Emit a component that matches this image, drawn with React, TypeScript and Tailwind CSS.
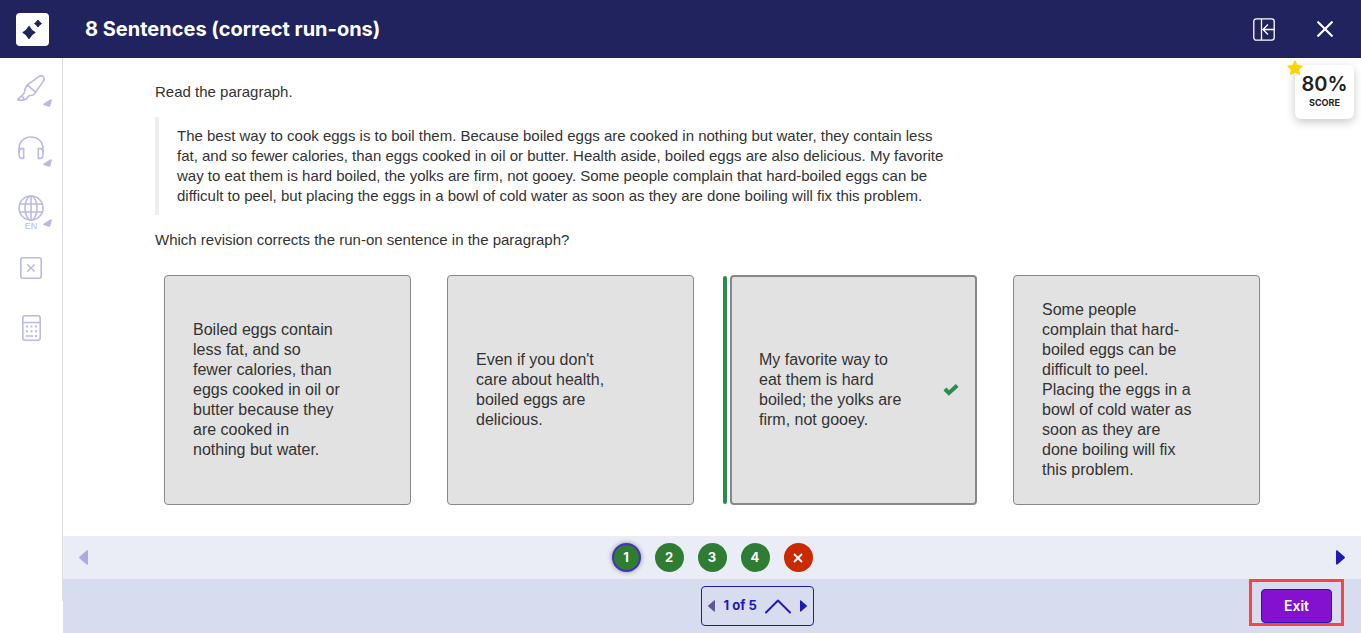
import type { ReactNode } from "react";

const answers = [
  { text: "Boiled eggs contain less fat, and so fewer calories, than eggs cooked in oil or butter because they are cooked in nothing but water.", correct: false },
  { text: "Even if you don't care about health, boiled eggs are delicious.", correct: false },
  { text: "My favorite way to eat them is hard boiled; the yolks are firm, not gooey.", correct: true },
  { text: "Some people complain that hard-boiled eggs can be difficult to peel. Placing the eggs in a bowl of cold water as soon as they are done boiling will fix this problem.", correct: false },
];

const questions = [
  { id: 1, correct: true },
  { id: 2, correct: true },
  { id: 3, correct: true },
  { id: 4, correct: true },
  { id: 5, correct: false },
];

function SparkleLogo() {
  return (
    <svg width="33" height="33" viewBox="0 0 33 33" aria-hidden="true">
      <rect width="33" height="33" rx="4" fill="#fff" />
      <path d="M13 13.6 Q15 17.5 18.9 19.5 Q15 21.5 13 25.4 Q11 21.5 7.1 19.5 Q11 17.5 13 13.6Z" fill="#21235e" stroke="#21235e" strokeWidth="1.2" strokeLinejoin="round" />
      <path d="M22 7 Q23.2 9.3 25.5 10.5 Q23.2 11.7 22 14 Q20.8 11.7 18.5 10.5 Q20.8 9.3 22 7Z" fill="#21235e" stroke="#21235e" strokeLinejoin="round" />
    </svg>
  );
}

function PanelIcon() {
  return (
    <svg width="22" height="23" viewBox="0 0 22 23" fill="none" stroke="#fff" strokeWidth="1.3" aria-hidden="true">
      <rect x="0.8" y="0.8" width="20.4" height="21.4" rx="2.6" />
      <path d="M8.5 1v21M21 11.5H10.5M15 6.5l-5 5 5 5" />
    </svg>
  );
}

function HighlighterIcon() {
  return (
    <svg width="28" height="28" viewBox="0 0 28 28" fill="none" stroke="currentColor" strokeWidth="1.6" strokeLinejoin="round" aria-hidden="true">
      <path d="M10.3 10.8 L22.5 2.2 Q24.6 0.9 26.3 2.7 Q27.8 4.4 26.7 6.6 L18.6 18.2" />
      <path d="M10.3 10.8 L18.6 18.2 L16.4 21 L12 21.8 L9.3 25 L7.4 25.6 L4.8 21.7 L7.4 18.8 L8 15z" />
      <path d="M4.8 21.7 L1 25.2 Q0.5 26 1.7 26.1 L6.4 26.1 L7.4 25.6" />
    </svg>
  );
}

function HeadphonesIcon() {
  return (
    <svg width="26" height="24" viewBox="0 0 26 24" fill="none" stroke="currentColor" strokeWidth="1.6" aria-hidden="true">
      <path d="M1 17V12.5C1 5.8 6 1 13 1s12 4.8 12 11.5V17" />
      <path d="M5.7 12.6v9.8H3.5C1.8 22.4 1 20.5 1 17.5s.8-4.9 2.5-4.9zM20.3 12.6v9.8h2.2c1.7 0 2.5-1.9 2.5-4.9s-.8-4.9-2.5-4.9z" strokeLinejoin="round" />
    </svg>
  );
}

function GlobeIcon() {
  return (
    <svg width="26" height="26" viewBox="0 0 26 26" fill="none" stroke="currentColor" strokeWidth="1.6" aria-hidden="true">
      <circle cx="13" cy="13" r="12" />
      <ellipse cx="13" cy="13" rx="6" ry="12" />
      <path d="M13 1v24M2 9h22M2 17h22" />
    </svg>
  );
}

function BoxedXIcon() {
  return (
    <svg width="22" height="22" viewBox="0 0 22 22" fill="none" stroke="currentColor" strokeWidth="1.6" aria-hidden="true">
      <rect x="0.8" y="0.8" width="20.4" height="20.4" rx="2.2" />
      <path d="M7.3 7.5l7.4 7M14.7 7.5l-7.4 7" />
    </svg>
  );
}

function CalculatorIcon() {
  return (
    <svg width="19" height="26" viewBox="0 0 19 26" fill="none" stroke="currentColor" strokeWidth="1.6" aria-hidden="true">
      <rect x="0.8" y="0.8" width="17.4" height="24.4" rx="2.4" />
      <path d="M1 7.5h17M3.8 21h7.4" />
      <path d="M4 11.5h2M8.5 11.5h2M13 11.5h2M4 16.3h2M8.5 16.3h2M13 16.3h2M13 21h2" strokeWidth="2" />
    </svg>
  );
}

function Triangle({ dir }: { dir: "left" | "right" }) {
  return (
    <svg width="9" height="15" viewBox="0 0 9 15" fill="currentColor" aria-hidden="true">
      <path d={dir === "left" ? "M9 1.4v12.2c0 1-1 1.4-1.7.7L.4 8.2a1 1 0 0 1 0-1.4L7.3.7C8 0 9 .4 9 1.4z" : "M0 1.4v12.2c0 1 1 1.4 1.7.7l6.9-6.1a1 1 0 0 0 0-1.4L1.7.7C1 0 0 .4 0 1.4z"} />
    </svg>
  );
}

function ToolButton({ label, caption, menu, children }: { label: string; caption?: string; menu?: boolean; children: ReactNode }) {
  return (
    <button type="button" aria-label={label} className="relative flex h-[60px] w-full flex-col items-center justify-center text-[#bbb9e6]">
      {children}
      {caption && <span className="absolute top-[43px] text-[9px] leading-[10px]">{caption}</span>}
      {menu && (
        <svg width="9" height="8" viewBox="0 0 9 8" fill="currentColor" className="absolute right-2.5 bottom-[11px]" aria-hidden="true">
          <path d="M8.8 1.2L7.4 6.8Q7 8 5.8 7.7L1 6.3Q-.4 5.6.8 4.6L7.2.4Q8.9-.2 8.8 1.2z" />
        </svg>
      )}
    </button>
  );
}

function AnswerCard({ text, correct }: { text: string; correct: boolean }) {
  return (
    <div className="relative flex">
      {correct && <span className="absolute inset-y-px -left-[7px] w-1 rounded-xs bg-[#278f4b]" />}
      <button
        type="button"
        aria-pressed={correct}
        className={`flex w-full items-center justify-between rounded-sm bg-[#e2e2e2] text-left ${correct ? "border-2 border-[#888] py-[23px] pr-4 pl-[27px]" : "border border-[#888] py-6 pr-4 pl-7"}`}
      >
        <span className="w-[150px] text-base leading-5">{text}</span>
        {correct && (
          <svg width="16" height="12" viewBox="0 0 16 12" fill="none" stroke="#278f4b" strokeWidth="4" aria-label="Correct">
            <path d="M1.9 5l4 3.9L14.2 1.6" />
          </svg>
        )}
      </button>
    </div>
  );
}

function ScoreBadge() {
  return (
    <div className="absolute top-[7px] right-[7px] flex h-[54px] w-[59px] flex-col items-center rounded-md bg-white pt-[7px] font-[Inter,sans-serif] text-[#222] shadow-[0_3px_10px_rgba(0,0,0,0.22)]">
      <svg width="16" height="16" viewBox="0 0 16 16" className="absolute -top-[5px] -left-2" aria-hidden="true">
        <path d="M8 1.2l2 4.4 4.9.6-3.6 3.2 1 4.8L8 11.9l-4.3 2.3 1-4.8L1.1 6.2 6 5.6z" fill="#ffd200" stroke="#ffd200" strokeWidth="1.4" strokeLinejoin="round" />
      </svg>
      <span className="text-xl leading-6 font-semibold">80%</span>
      <span className="text-[9px] leading-[14px] font-bold">SCORE</span>
    </div>
  );
}

export default function App() {
  return (
    <div className="flex min-h-screen flex-col bg-white font-['Liberation_Sans',Arial,sans-serif] text-[#333]">
      <header className="flex h-[58px] items-center bg-[#21235e] pr-7 pl-4 font-[Inter,sans-serif] text-white">
        <SparkleLogo />
        <h1 className="ml-9 flex-1 text-xl font-bold">8 Sentences (correct run-ons)</h1>
        <button type="button" aria-label="Collapse panel">
          <PanelIcon />
        </button>
        <button type="button" aria-label="Close" className="ml-[42px]">
          <svg width="16" height="16" viewBox="0 0 16 16" stroke="#fff" strokeWidth="2.2" strokeLinecap="round" aria-hidden="true">
            <path d="M1.2 1.2l13.6 13.6M14.8 1.2L1.2 14.8" />
          </svg>
        </button>
      </header>

      <div className="flex flex-1">
        <aside className="mb-8 w-[63px] shrink-0 border-r border-[#ddd]">
          <ToolButton label="Highlighter" menu><HighlighterIcon /></ToolButton>
          <ToolButton label="Read aloud" menu><HeadphonesIcon /></ToolButton>
          <ToolButton label="Language" caption="EN" menu><GlobeIcon /></ToolButton>
          <ToolButton label="Eliminate answer"><BoxedXIcon /></ToolButton>
          <ToolButton label="Calculator"><CalculatorIcon /></ToolButton>
        </aside>

        <div className="relative flex flex-1 flex-col">
          <ScoreBadge />

          <main className="flex-1 px-[92px] pt-6 pb-7 text-[15px] leading-5">
            <p>Read the paragraph.</p>
            <blockquote className="mt-[15px] border-l-4 border-[#eee] py-[9px] pl-[18px]">
              <p className="max-w-[776px]">
                The best way to cook eggs is to boil them. Because boiled eggs are cooked in nothing but water, they contain less<br />
                fat, and so fewer calories, than eggs cooked in oil or butter. Health aside, boiled eggs are also delicious. My favorite<br />
                way to eat them is hard boiled, the yolks are firm, not gooey. Some people complain that hard-boiled eggs can be<br />
                difficult to peel, but placing the eggs in a bowl of cold water as soon as they are done boiling will fix this problem.
              </p>
            </blockquote>
            <p className="mt-[15px]">Which revision corrects the run-on sentence in the paragraph?</p>
            <div className="mt-[25px] grid grid-cols-4 gap-9 px-[9px]">
              {answers.map((a) => (
                <AnswerCard key={a.text} text={a.text} correct={a.correct} />
              ))}
            </div>
          </main>

          <nav className="flex h-[43px] items-center justify-between bg-[#eaedf6] px-4 font-[Inter,sans-serif]">
            <button type="button" aria-label="Previous question" disabled className="text-[#adaae0]">
              <Triangle dir="left" />
            </button>
            <div className="flex gap-3.5">
              {questions.map((q) => (
                <button
                  key={q.id}
                  type="button"
                  aria-label={`Question ${q.id}`}
                  className={`flex size-[29px] items-center justify-center rounded-full text-[13px] font-bold text-white ${q.correct ? "bg-[#2e7d32]" : "bg-[#c92a00]"} ${q.id === 1 ? "border-2 border-[#4530c0] shadow-[0_0_5px_rgba(0,0,0,0.4)]" : ""}`}
                >
                  {q.correct ? (
                    q.id
                  ) : (
                    <svg width="10" height="10" viewBox="0 0 10 10" stroke="#fff" strokeWidth="1.8" aria-hidden="true">
                      <path d="M1 1l8 8M9 1L1 9" />
                    </svg>
                  )}
                </button>
              ))}
            </div>
            <button type="button" aria-label="Next question" className="text-[#2019b5]">
              <Triangle dir="right" />
            </button>
          </nav>

          <footer className="grid h-[54px] grid-cols-[1fr_auto_1fr] items-start bg-[#d7dcef] pr-[17px] pl-[108px] font-[Inter,sans-serif]">
            <span />
            <div className="mt-[7px] flex h-10 w-[113px] items-center justify-between rounded-sm border border-[#2019b5] px-1.5 text-[#2019b5]">
              <button type="button" aria-label="Previous page" disabled className="text-[#5c5a94]">
                <svg width="7" height="12" viewBox="0 0 9 15" fill="currentColor" aria-hidden="true"><path d="M9 1v13c0 1-1 1-1.7.3L.4 8.2a1 1 0 0 1 0-1.4L7.3.7C8 0 9 0 9 1z" /></svg>
              </button>
              <span className="text-[13px] font-bold">1 of 5</span>
              <button type="button" aria-label="Show pages">
                <svg width="26" height="15" viewBox="0 0 26 15" fill="none" stroke="currentColor" strokeWidth="2" strokeLinecap="round" strokeLinejoin="round" aria-hidden="true">
                  <path d="M1 13.5L13 1.5l12 12" />
                </svg>
              </button>
              <button type="button" aria-label="Next page">
                <svg width="7" height="12" viewBox="0 0 9 15" fill="currentColor" aria-hidden="true"><path d="M0 1v13c0 1 1 1 1.7.3l6.9-6.1a1 1 0 0 0 0-1.4L1.7.7C1 0 0 0 0 1z" /></svg>
              </button>
            </div>
            <div className="justify-self-end border-3 border-[#fb4343] px-[9px] pt-[7px]">
              <button type="button" className="block h-[34px] w-[71px] rounded-sm border border-[#2019b5] bg-[#8410d0] text-sm font-semibold text-white">Exit</button>
            </div>
          </footer>
        </div>
      </div>
    </div>
  );
}
